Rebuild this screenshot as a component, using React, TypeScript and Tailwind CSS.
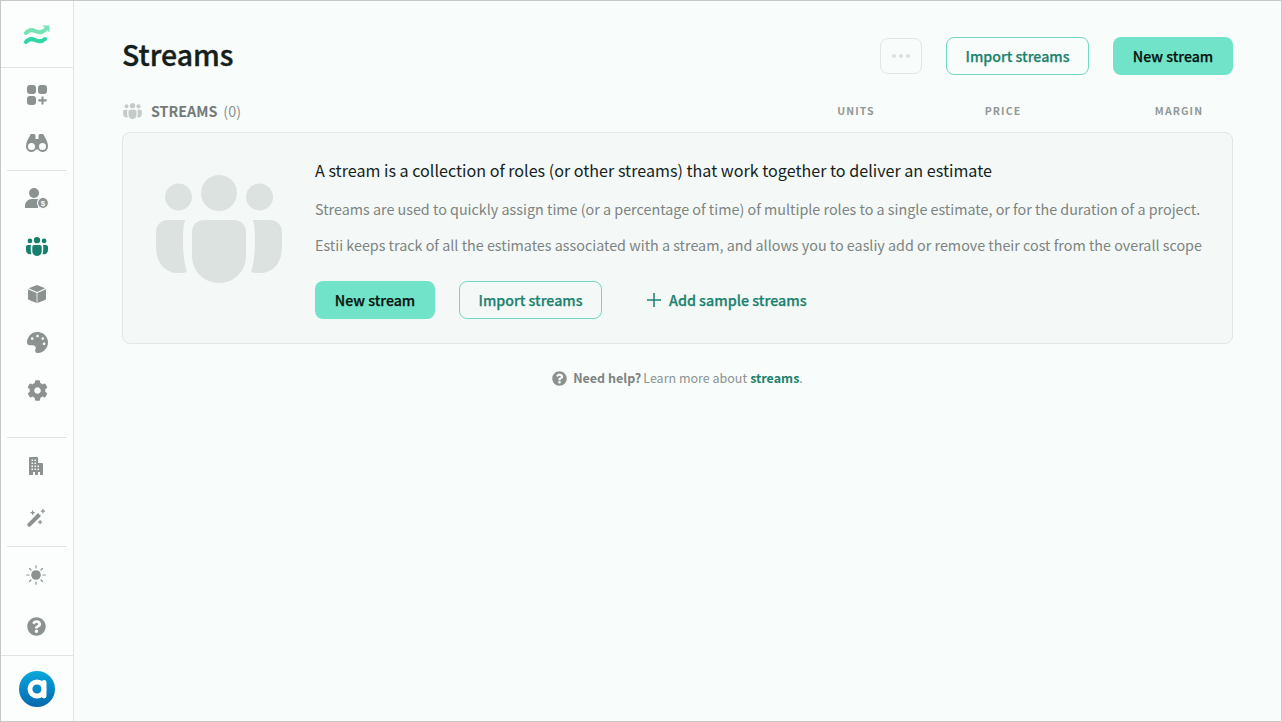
import React from "react";
import { FaCog, FaPalette, FaQuestionCircle } from "react-icons/fa";

function Team({ className, color }: { className?: string; color: string }) {
  return (
    <svg viewBox="0 0 126 108" className={className} fill={color}>
      <circle cx="22.5" cy="22" r="13.5" />
      <circle cx="63" cy="18" r="18" />
      <circle cx="103.5" cy="22" r="13.5" />
      <path d="M12 45h17c-3 10-3 38 2 52-3 1-6 1-9 1C9 98 0 88 0 72V57c0-7 5-12 12-12z" />
      <path d="M114 45H97c3 10 3 38-2 52 3 1 6 1 9 1 13 0 22-10 22-26V57c0-7-5-12-12-12z" />
      <path d="M48 45h30c7 0 12 5 12 12v24c0 15-12 27-27 27S36 96 36 81V57c0-7 5-12 12-12z" />
    </svg>
  );
}

function Logo() {
  return (
    <svg viewBox="0 0 26 22" className="w-[26px] h-[22px]" fill="none" strokeLinecap="round">
      <path d="M2 8c3-3.500 6-3.500 9-2s6 2.500 10-1" stroke="#74e3b6" strokeWidth="4" />
      <path d="M18.500 .5H25.500V7.500z" fill="#74e3b6" />
      <path d="M2 17c3-3.500 6-3.500 9-2s6 2.500 10-1" stroke="#2ed6a6" strokeWidth="4" />
    </svg>
  );
}

function Apps() {
  return (
    <svg viewBox="0 0 22 22" className="w-[22px] h-[22px]" fill="#8c9290">
      <rect x="1" y="1" width="9" height="9" rx="3" />
      <rect x="12" y="1" width="9" height="9" rx="3" />
      <rect x="1" y="12" width="9" height="9" rx="3" />
      <path d="M15.500 12.500h2v2.800h3.200v2.200h-3.200v3h-2v-3h-3.200v-2.200h3.200z" />
    </svg>
  );
}

function Binoculars() {
  return (
    <svg viewBox="0 0 22 18" className="w-[22px] h-[18px]" fill="#8c9290" fillRule="evenodd">
      <path d="M4 1.500C4 .7 4.700 0 5.500 0h2.200C8.500 0 9.500.7 9.500 1.500V5h3V1.500c0-.8 1-1.500 1.800-1.500h2.200c.8 0 1.500.7 1.500 1.500C20 5 22 8.500 22 12.500A5.500 5.500 0 0 1 12 15.600h-2A5.500 5.500 0 0 1 0 12.500C0 8.500 2 5 4 1.500zM5.500 9a3.500 3.500 0 1 0 0 7 3.500 3.500 0 0 0 0-7zm11 0a3.500 3.500 0 1 0 0 7 3.500 3.500 0 0 0 0-7z" />
    </svg>
  );
}

function UserCost() {
  return (
    <svg viewBox="0 0 26 22" className="w-[26px] h-[22px]">
      <circle cx="10" cy="6" r="5" fill="#8c9290" />
      <path d="M1 21c-.5-6 3-9 7-9h4c3 0 5 1 6 3-3 1-4 3-4 6z" fill="#8c9290" />
      <circle cx="19" cy="16" r="5.500" fill="#8c9290" stroke="#f9fcfb" strokeWidth="1.200" />
      <text x="19" y="18.800" textAnchor="middle" fontSize="8" fontWeight="700" fill="#f9fcfb" fontFamily="Liberation Sans">$</text>
    </svg>
  );
}

function Cube() {
  return (
    <svg viewBox="0 0 18 18" className="w-[18px] h-[18px]" fill="#8c9290">
      <path d="M9 0l8.300 3.300L9 7 .7 3.300z" />
      <path d="M0 4.200l8.600 3.800V18L1 15c-.6-.3-1-.8-1-1.500z" />
      <path d="M18 4.200L9.400 8V18l7.600-3c.6-.3 1-.8 1-1.500z" />
    </svg>
  );
}

function Building() {
  return (
    <svg viewBox="0 0 14 18" className="w-[14px] h-[18px]" fill="#8c9290" fillRule="evenodd">
      <path d="M1 0h7c.5 0 1 .5 1 1v5h4c.5 0 1 .5 1 1v11h-3v-3H9v3H6v-3H4v3H0V1c0-.5.500-1 1-1zM2.500 2.500v1.500H4V2.500zm3 0v1.500H7V2.500zM2.500 5.500V7H4V5.500zm3 0V7H7V5.500zM2.500 8.500V10H4V8.500zm3 0V10H7V8.500zm3 0V10H10V8.500zM2.500 11.500V13H4v-1.500zm3 0V13H7v-1.500zm3 0V13H10v-1.500z" />
    </svg>
  );
}

function Wand() {
  return (
    <svg viewBox="0 0 18 18" className="w-[18px] h-[18px]" fill="#8c9290">
      <path d="M11 4l3 3L3.500 17.200c-.7.700-1.800.700-2.500 0l-.2-.2c-.7-.7-.7-1.800 0-2.500z" />
      <path d="M5 1.500h1.200V3h1.500v1.200H6.200v1.500H5V4.200H3.500V3H5zM15.300 0h1.200v1.500H18v1.200h-1.500v1.500h-1.200V2.700h-1.500V1.500h1.500zM12.500 11h1.200v1.500h1.500v1.200h-1.500v1.500h-1.200v-1.500H11v-1.200h1.500z" />
    </svg>
  );
}

function Sun() {
  return (
    <svg viewBox="0 0 20 20" className="w-5 h-5" fill="#8c9290" stroke="#8c9290" strokeWidth="1.200" strokeLinecap="round">
      <circle cx="10" cy="10" r="4.800" stroke="none" />
      <path d="M10 .8v2.200M10 17v2.200M.8 10H3M17 10h2.200M3.500 3.500l1.500 1.500M15 15l1.500 1.500M3.500 16.500 5 15M15 5l1.500-1.500" fill="none" />
    </svg>
  );
}

function Avatar() {
  return (
    <div className="w-9 h-9 rounded-full bg-gradient-to-b from-[#0aa8dc] to-[#0668ae] flex items-center justify-center">
      <svg viewBox="0 0 24 24" className="w-[26px] h-[26px]" fill="none">
        <circle cx="12" cy="12" r="6.500" stroke="#fff" strokeWidth="4.500" />
        <path d="M18.500 6v12.500" stroke="#fff" strokeWidth="4.500" strokeLinecap="round" />
      </svg>
    </div>
  );
}

function Row({ children }: { children: React.ReactNode }) {
  return <div className="h-12 flex items-center justify-center text-[#8c9290]">{children}</div>;
}

function RowLeft({ children }: { children: React.ReactNode }) {
  return <div className="h-12 flex items-center justify-center pr-[2px] text-[#8c9290]">{children}</div>;
}

function Divider() {
  return <div className="h-px mx-[6px] bg-[#dfe3e1]" />;
}

function Primary({ children, w }: { children: React.ReactNode; w: string }) {
  return (
    <button className={`${w} h-[38px] pt-[2px] rounded-lg bg-[#71e3c8] text-[14.2px] font-medium [-webkit-text-stroke:0.25px] text-[#08130f] flex items-center justify-center`}>
      {children}
    </button>
  );
}

function Outline({ children, w }: { children: React.ReactNode; w: string }) {
  return (
    <button className={`${w} h-[38px] pt-[2px] rounded-lg border border-[#71d9c1] text-[14.2px] font-medium [-webkit-text-stroke:0.25px] text-[#1c8270] flex items-center justify-center`}>
      {children}
    </button>
  );
}

export default function App() {
  return (
    <div
      className="w-[1282px] h-[722px] flex border border-[#c4c8c7] bg-[#f8fcfb] overflow-hidden text-[#161e1c]"
      style={{ fontFamily: '"Noto Sans CJK SC", "Noto Sans", sans-serif' }}
    >
      <aside className="w-[73px] shrink-0 flex flex-col border-r border-[#dfe3e1] bg-[#fbfefd]">
        <div className="h-[66px] flex items-center justify-center pt-[4px]"><Logo /></div>
        <div className="h-px bg-[#dfe3e1]" />
        <div className="pt-[3px] pb-[3px]">
          <Row><Apps /></Row>
          <Row><Binoculars /></Row>
        </div>
        <Divider />
        <div className="pt-[3px]">
          <Row><UserCost /></Row>
          <Row><Team className="w-[22px] h-[19px]" color="#17806c" /></Row>
          <Row><Cube /></Row>
          <Row><FaPalette size={21} className="-scale-x-100" /></Row>
          <Row><FaCog size={21} /></Row>
        </div>
        <div className="h-[23px]" />
        <Divider />
        <div className="pt-[4px]">
          <RowLeft><Building /></RowLeft>
          <div className="h-1" />
          <RowLeft><Wand /></RowLeft>
        </div>
        <div className="h-[4px]" />
        <Divider />
        <div className="pt-[4px]">
          <RowLeft><Sun /></RowLeft>
          <div className="h-[3px]" />
          <RowLeft><FaQuestionCircle size={19} /></RowLeft>
        </div>
        <div className="h-px bg-[#dfe3e1] mt-[5px]" />
        <div className="flex-1 flex items-center justify-center"><Avatar /></div>
      </aside>

      <main className="flex-1 pl-12 pr-[48px] pt-[35px]">
        <header className="flex items-center h-[40px]">
          <h1 className="text-[28.4px] font-medium [-webkit-text-stroke:0.4px] leading-none text-[#161e1c] flex-1 -mt-[4px]">Streams</h1>
          <button className="w-[42px] h-[36px] rounded-lg border border-[#e2e6e4] flex items-center justify-center gap-[3px] mr-6">
            <span className="w-1 h-1 rounded-full bg-[#dcdfde]" />
            <span className="w-1 h-1 rounded-full bg-[#dcdfde]" />
            <span className="w-1 h-1 rounded-full bg-[#dcdfde]" />
          </button>
          <Outline w="w-[143px]">Import streams</Outline>
          <div className="w-6" />
          <Primary w="w-[120px]">New stream</Primary>
        </header>

        <div className="flex items-center h-[24px] mt-[23px] mb-[9px]">
          <Team className="w-[19px] h-[16px] ml-px mr-[9px]" color="#c4cbc8" />
          <span className="text-[14.3px] font-bold text-[#747a78]">STREAMS</span>
          <span className="text-[14.3px] text-[#8c9290] ml-[6px]">(0)</span>
          <div className="flex-1" />
          <span className="w-[60px] text-center text-[10.5px] font-bold tracking-[1.1px] text-[#939896] mr-[87px]">UNITS</span>
          <span className="w-[60px] text-center text-[10.5px] font-bold tracking-[1.1px] text-[#939896] mr-[116px]">PRICE</span>
          <span className="w-[60px] text-center text-[10.5px] font-bold tracking-[1.1px] text-[#939896] mr-[24px]">MARGIN</span>
        </div>

        <section className="h-[212px] rounded-lg border border-[#e2e6e4] bg-[#f4f9f7] flex pl-[33px]">
          <div className="w-[126px] pt-[42px] shrink-0">
            <Team className="w-[126px] h-[108px]" color="#dce2df" />
          </div>
          <div className="ml-[33px] pt-[25px] flex-1 min-w-0">
            <h2 className="text-[16.12px] leading-6 text-[#161e1c]">A stream is a collection of roles (or other streams) that work together to deliver an estimate</h2>
            <p className="text-[14.33px] leading-6 text-[#7d8381] mt-[15px] whitespace-nowrap">Streams are used to quickly assign time (or a percentage of time) of multiple roles to a single estimate, or for the duration of a project.</p>
            <p className="text-[14.33px] leading-6 text-[#7d8381] mt-3 whitespace-nowrap">Estii keeps track of all the estimates associated with a stream, and allows you to easliy add or remove their cost from the overall scope</p>
            <div className="flex items-center mt-[24px]">
              <Primary w="w-[120px]">New stream</Primary>
              <div className="w-6" />
              <Outline w="w-[143px]">Import streams</Outline>
              <button className="ml-[45px] flex items-center text-[14.3px] font-medium [-webkit-text-stroke:0.25px] text-[#1c8270]">
                <svg viewBox="0 0 14 14" className="w-[14px] h-[14px] mr-2" stroke="#1c8270" strokeWidth="1.500" fill="none"><path d="M7 0v14M0 7h14" /></svg>
                Add sample streams
              </button>
            </div>
          </div>
        </section>

        <div className="flex items-center justify-center mt-[24px] text-[12.5px] leading-5 text-[#8c9290]">
          <FaQuestionCircle size={15} className="mr-[6px] text-[#8c9290]" />
          <span className="font-bold mr-[2px] text-[#7d8381]">Need help?</span>
          <span>Learn more about </span>
          <span className="font-bold text-[#1c8270] ml-[3px]">streams</span>
          <span>.</span>
        </div>
      </main>
    </div>
  );
}
